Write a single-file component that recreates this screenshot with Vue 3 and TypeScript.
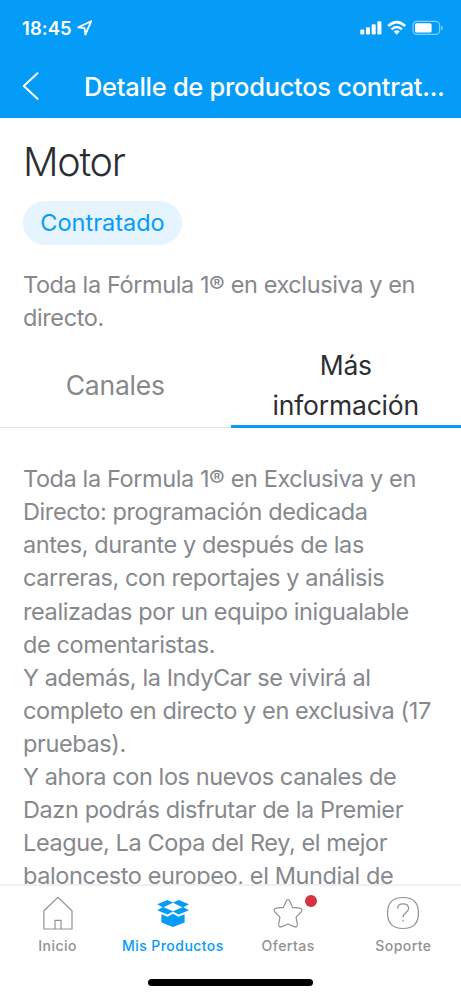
<script setup lang="ts">
interface Tab {
  lines: string[]
  active: boolean
}

const tabs: Tab[] = [
  { lines: ['Canales'], active: false },
  { lines: ['Más', 'información'], active: true },
]

const summary: string[] = ['Toda la Fórmula 1® en exclusiva y en', 'directo.']

const details: string[] = [
  'Toda la Formula 1® en Exclusiva y en',
  'Directo: programación dedicada',
  'antes, durante y después de las',
  'carreras, con reportajes y análisis',
  'realizadas por un equipo inigualable',
  'de comentaristas.',
  'Y además, la IndyCar se vivirá al',
  'completo en directo y en exclusiva (17',
  'pruebas).',
  'Y ahora con los nuevos canales de',
  'Dazn podrás disfrutar de la Premier',
  'League, La Copa del Rey, el mejor',
  'baloncesto europeo, el Mundial de',
]
</script>

<template>
  <div class="screen">
    <header class="header">
      <div class="status">
        <span class="time">18:45</span>
        <svg class="location" width="16" height="16" viewBox="0 0 16 16">
          <path d="M14.2 1.2 L1.2 7.4 L7.6 8.2 L8.4 14.6 Z" />
        </svg>
        <svg class="signals" width="84" height="16" viewBox="0 0 84 16">
          <rect x="0.3" y="9.6" width="4" height="5" rx="1" />
          <rect x="6" y="7.2" width="4" height="7.4" rx="1" />
          <rect x="11.7" y="4.2" width="4" height="10.4" rx="1" />
          <rect x="17.4" y="1.2" width="4" height="13.4" rx="1" />
          <path class="arc" d="M28.2 6 Q36.7 -1.8 45.2 6" />
          <path class="arc" d="M31.5 9.4 Q36.7 4.6 41.9 9.4" />
          <path d="M33.7 11.5 Q36.7 8.8 39.7 11.5 L36.7 14.7 Z" />
          <rect class="battery" x="53" y="1.4" width="26.6" height="13" rx="3.8" />
          <rect x="55" y="3.2" width="16.6" height="9.4" rx="1.6" />
          <path class="cap" d="M81.2 5.6 Q83 6.2 83 8 Q83 9.8 81.2 10.4 Z" />
        </svg>
      </div>
      <div class="nav">
        <svg class="back" width="18" height="30" viewBox="0 0 18 30">
          <path d="M15.5 2.2 L1.8 15 L15.5 27.8" />
        </svg>
        <h1 class="nav-title">Detalle de productos contrat...</h1>
      </div>
    </header>

    <main class="content">
      <section class="intro">
        <h2 class="name">Motor</h2>
        <span class="badge">Contratado</span>
        <p class="copy">
          <span v-for="line in summary" :key="line" class="line">{{ line }}</span>
        </p>
      </section>

      <div class="tabs">
        <button v-for="tab in tabs" :key="tab.lines[0]" class="tab" :class="{ active: tab.active }">
          <span v-for="line in tab.lines" :key="line">{{ line }}</span>
        </button>
      </div>

      <p class="copy details">
        <span v-for="line in details" :key="line" class="line">{{ line }}</span>
      </p>
    </main>

    <footer class="bottom">
      <nav class="menu">
        <a class="item">
          <svg width="34" height="34" viewBox="0 0 34 34">
            <path d="M2.9 14.8 L17 1.4 L31 14.8 V33 H2.9 Z M14 33 V24.3 H20 V33" />
          </svg>
          <span>Inicio</span>
        </a>
        <a class="item current">
          <svg width="34" height="34" viewBox="0 0 34 34">
            <path d="M11.2 4 L17 6.5 L22.8 4 L33 8.3 L27.5 11.3 L33 14.2 L22.6 18.6 L17 15.6 L11.4 18.6 L1.2 14.2 L6.6 11.3 L1.2 8.3 Z M17 6.8 L7.6 11.3 L17 15.3 L26.4 11.3 Z" />
            <path d="M5.4 18.2 L11.6 20.8 L17 17.8 L22.4 20.8 L28.6 18.2 V26.4 L17 31 L5.4 26.4 Z" />
          </svg>
          <span>Mis Productos</span>
        </a>
        <a class="item">
          <svg width="34" height="34" viewBox="0 0 34 34">
            <path d="M15.2 5.2 Q17 2.2 18.8 5.2 L21.6 11.4 L28.6 12.2 Q32.4 13 30 16 L25.1 21.2 L26.4 28.4 Q26.3 31.8 23 30.6 L17 27.8 L11 30.6 Q7.7 31.8 7.6 28.4 L8.9 21.2 L4 16 Q1.6 13 5.4 12.2 L12.4 11.4 Z" />
          </svg>
          <i class="dot"></i>
          <span>Ofertas</span>
        </a>
        <a class="item">
          <svg width="34" height="34" viewBox="0 0 34 34">
            <path d="M17 1.5 C27.2 1.5 32.5 6.8 32.5 17 C32.5 27.2 27.2 32.5 17 32.5 C6.8 32.5 1.5 27.2 1.5 17 C1.5 6.8 6.8 1.5 17 1.5 Z" />
            <path d="M11.6 12.8 C11.6 9.6 13.8 7.8 17 7.8 C20.4 7.8 22.6 9.8 22.6 12.6 C22.6 16.6 17.1 16.4 17.1 21.2" />
            <path d="M17.1 23.8 V25.6" />
          </svg>
          <span>Soporte</span>
        </a>
      </nav>
      <div class="home-bar"></div>
    </footer>
  </div>
</template>

<style>
body {
  background: #fff;
}
</style>

<style scoped>
.screen {
  width: 461px;
  height: 998px;
  display: flex;
  flex-direction: column;
  overflow: hidden;
  background: #fff;
  color: #86888c;
  font-family: Inter, "Liberation Sans", sans-serif;
}

.header {
  flex: none;
  height: 118px;
  background: #049cf7;
  color: #fff;
}

.status {
  display: flex;
  align-items: center;
  height: 56px;
  padding: 0 17px 0 22px;
}

.time {
  font-size: 18.4px;
  font-weight: 600;
  letter-spacing: 0.1px;
}

.location {
  margin-left: 5px;
  fill: none;
  stroke: #fff;
  stroke-width: 1.8;
  stroke-linejoin: round;
}

.signals {
  margin-left: auto;
  fill: #fff;
}

.arc {
  fill: none;
  stroke: #fff;
  stroke-width: 2.5;
}

.battery {
  fill: none;
  stroke: #80cdfb;
  stroke-width: 1.2;
}

.cap {
  fill: #80cdfb;
}

.nav {
  display: flex;
  align-items: center;
  height: 60px;
  padding-left: 22px;
}

.back {
  flex: none;
  fill: none;
  stroke: #fff;
  stroke-width: 2;
  stroke-linecap: round;
  stroke-linejoin: round;
}

.nav-title {
  margin: 0 0 0 44px;
  font-size: 25.5px;
  font-weight: 500;
  letter-spacing: -0.3px;
  white-space: nowrap;
}

.content {
  flex: 1;
  min-height: 0;
  overflow: hidden;
}

.intro {
  padding: 20px 23px 0;
}

.name {
  margin: 0;
  color: #2c2e32;
  font-size: 39.5px;
  font-weight: 300;
  line-height: 49px;
  letter-spacing: -1.3px;
}

.badge {
  display: flex;
  align-items: center;
  justify-content: center;
  width: 159px;
  height: 44px;
  margin-top: 14px;
  padding-bottom: 2px;
  box-sizing: border-box;
  border-radius: 22px;
  background: #e5f4fe;
  color: #049cf7;
  font-size: 23.5px;
}

.copy {
  margin: 0;
  font-size: 23.5px;
  font-weight: 400;
  line-height: 33.1px;
  letter-spacing: -0.4px;
}

.intro .copy {
  margin-top: 23px;
}

.line {
  display: block;
  white-space: nowrap;
}

.tabs {
  display: grid;
  grid-template-columns: 1fr 1fr;
  margin-top: 12px;
}

.tab {
  display: flex;
  flex-direction: column;
  align-items: center;
  justify-content: center;
  height: 82px;
  padding: 0 0 3px;
  box-sizing: border-box;
  border: 0;
  border-bottom: 1px solid #e4e4e6;
  background: none;
  color: #86888c;
  font: 400 26.5px/40px Inter, "Liberation Sans", sans-serif;
  letter-spacing: -0.2px;
}

.tab.active {
  padding-bottom: 1px;
  border-bottom: 3px solid #049cf7;
  color: #2c2e32;
}

.details {
  padding: 34px 23px 0;
}

.bottom {
  flex: none;
  height: 114px;
  border-top: 2px solid #f0f0f2;
  box-sizing: border-box;
  background: #fff;
}

.menu {
  display: grid;
  grid-template-columns: repeat(4, 1fr);
  height: 93px;
}

.item {
  position: relative;
  display: flex;
  flex-direction: column;
  align-items: center;
  padding-top: 10px;
  color: #919191;
  font-size: 14px;
  font-weight: 500;
  line-height: 18px;
  letter-spacing: 0.45px;
  white-space: nowrap;
}

.item svg {
  margin-bottom: 7px;
  fill: none;
  stroke: #919191;
  stroke-width: 1.2;
}

.item.current {
  color: #049cf7;
}

.item.current svg {
  fill: #049cf7;
  fill-rule: evenodd;
  stroke: none;
}

.dot {
  position: absolute;
  top: 9px;
  left: 74px;
  width: 12px;
  height: 12px;
  border-radius: 50%;
  background: #d73241;
}

.home-bar {
  width: 165px;
  height: 7px;
  margin: 0 auto;
  border-radius: 4px;
  background: #000;
}
</style>
